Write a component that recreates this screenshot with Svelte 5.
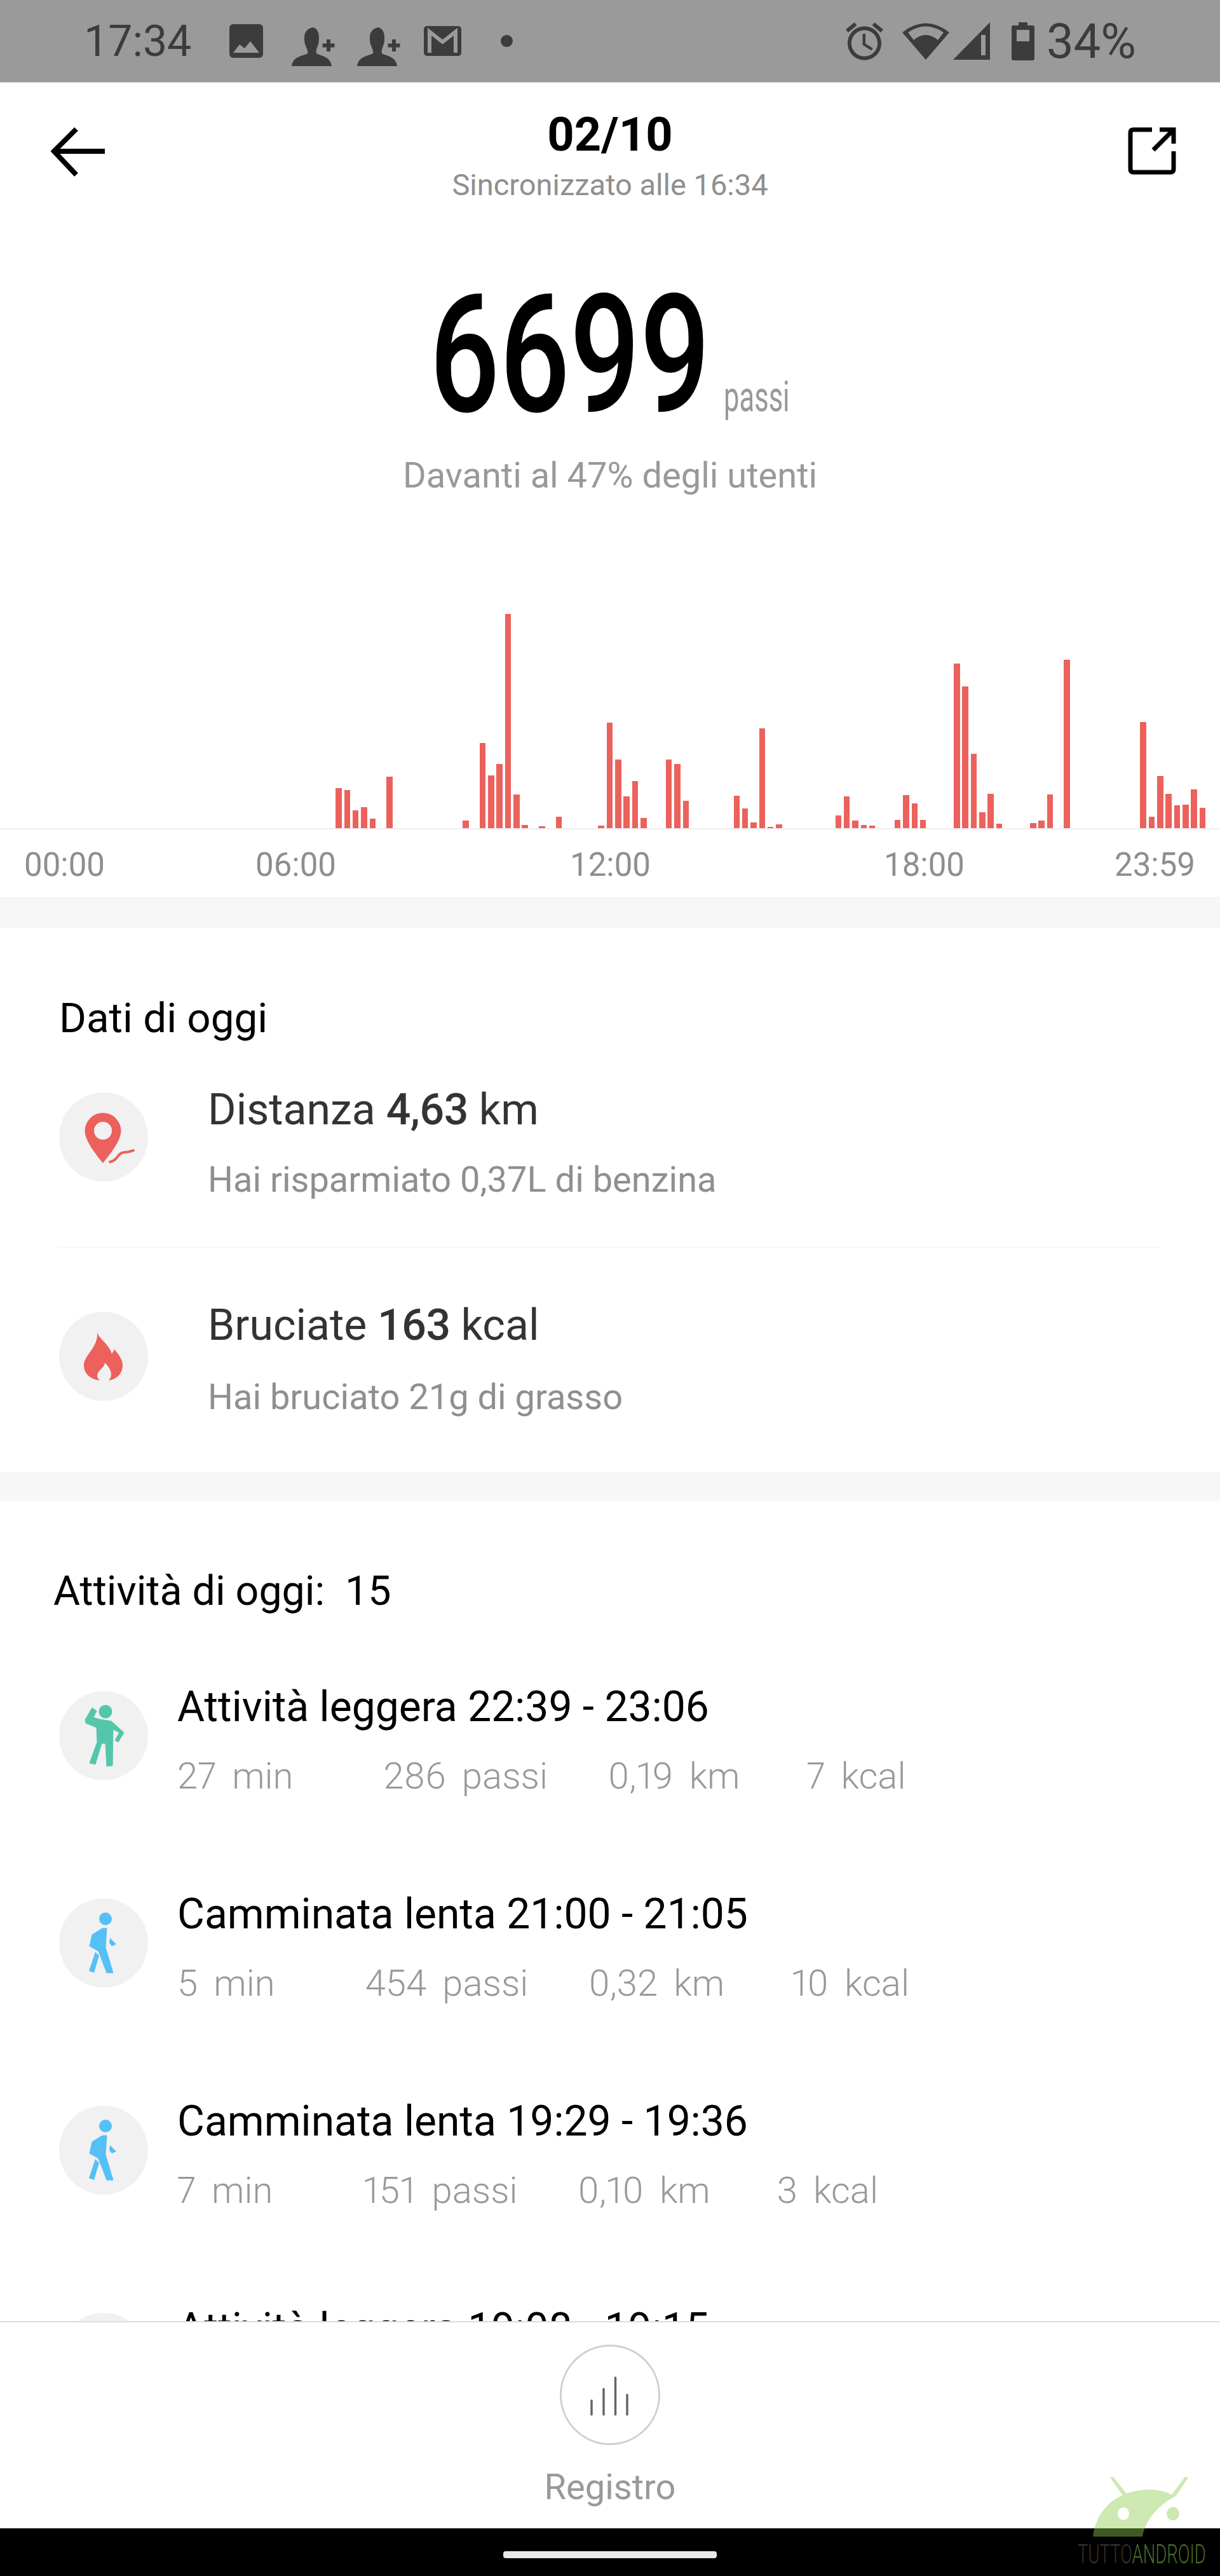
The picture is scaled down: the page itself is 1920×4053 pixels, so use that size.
<script>
  // [slot from the first active 10 minute bucket, height in px]
  const active = [
    [0, 63], [1, 60], [2, 28], [3, 33], [4, 15], [6, 81], [15, 12], [17, 134], [18, 83], [19, 101],
    [20, 337], [21, 53], [22, 5], [24, 3], [26, 18], [31, 4], [32, 166], [33, 108], [34, 50], [35, 74],
    [36, 16], [39, 108], [40, 101], [41, 43], [47, 51], [48, 31], [49, 9], [50, 157], [51, 2], [52, 6],
    [59, 20], [60, 50], [61, 12], [62, 5], [63, 4], [66, 13], [67, 52], [68, 39], [69, 13], [73, 259],
    [74, 223], [75, 117], [76, 25], [77, 54], [78, 7], [82, 8], [83, 12], [84, 53], [86, 265], [95, 167],
    [96, 18], [97, 82], [98, 54], [99, 36], [100, 37], [101, 61], [102, 32]
  ];
  const slots = Array(144).fill(0);
  for (const [i, h] of active) slots[i + 39] = h;

  const hours = ['00:00', '06:00', '12:00', '18:00', '23:59'];

  const activities = [
    { kind: 'stand', title: 'Attività leggera 22:39 - 23:06', meta: ['27 min', '286 passi', '0,19 km', '7 kcal'] },
    { kind: 'walk', title: 'Camminata lenta 21:00 - 21:05', meta: ['5 min', '454 passi', '0,32 km', '10 kcal'] },
    { kind: 'walk', title: 'Camminata lenta 19:29 - 19:36', meta: ['7 min', '151 passi', '0,10 km', '3 kcal'] },
    { kind: 'stand', title: 'Attività leggera 19:08 - 19:15', meta: [] }
  ];
</script>

<div class="page">
  <div class="status">
    <span class="clock">17:34</span>
    <svg class="st-image" width="53" height="53" viewBox="0 0 53 53">
      <rect width="53" height="53" rx="6" fill="#3c3c3c" />
      <path d="M6 45 L16 32 L24 38 L33 27 L47 45Z" fill="#9a9a9a" />
    </svg>
    {#each [0, 1] as n}
      <svg class="st-person" width="68" height="62" viewBox="0 0 68 62" data-n={n}>
        <path d="M33 1C41 3 43 10 43 17C43 21 43 26 41 30C39 35 38 39 39 42C45 46 61 46 63 62L0 62C2 46 19 46 25 42C26 39 24 35 22 30C20 26 20 21 20 17C20 8 25 3 33 1Z" fill="#3c3c3c" />
        <path d="M55 20h6v6.500h6.500v6h-6.500v6.500h-6v-6.500h-6.500v-6h6.500z" fill="#3c3c3c" />
      </svg>
    {/each}
    <svg class="st-mail" width="59" height="47" viewBox="0 0 59 47">
      <rect width="59" height="47" rx="5" fill="#3c3c3c" />
      <path d="M9 42V9L29.500 25L50 9V42" fill="none" stroke="#9a9a9a" stroke-width="6" />
    </svg>
    <span class="st-dot"></span>

    <div class="st-right">
      <svg class="st-alarm" width="59" height="60" viewBox="2 1.800 20 20.300">
        <path d="M22 5.720l-4.600-3.860-1.290 1.530 4.600 3.860L22 5.720zM7.880 3.390L6.600 1.860 2 5.710l1.290 1.530 4.590-3.850zM12.500 8H11v6l4.750 2.850.75-1.230-4-2.370V8zM12 4c-4.970 0-9 4.030-9 9s4.030 9 9 9 9-4.030 9-9-4.030-9-9-9zm0 16c-3.870 0-7-3.130-7-7s3.130-7 7-7 7 3.130 7 7-3.130 7-7 7z" fill="#3c3c3c" />
      </svg>
      <svg class="st-wifi" width="74" height="58" viewBox="0 0 74 58">
        <path d="M0 15Q37-14 74 15L37 58Z" fill="#3c3c3c" />
        <path d="M9 15Q37-4 65 15L56 27Q37 11 18 27Z" fill="#9a9a9a" />
      </svg>
      <svg class="st-signal" width="58" height="59" viewBox="0 0 58 59">
        <path d="M58 0V59H0Z" fill="#3c3c3c" />
        <path d="M44 20H51V52H44Z" fill="#9a9a9a" />
      </svg>
      <svg class="st-battery" width="36" height="60" viewBox="0 0 36 60">
        <path d="M11 0H25V5H33Q36 5 36 8V57Q36 60 33 60H3Q0 60 0 57V8Q0 5 3 5H11Z" fill="#3c3c3c" />
        <rect x="8" y="12" width="20" height="18" fill="#9a9a9a" />
      </svg>
      <span class="percent">34%</span>
    </div>
  </div>

  <header class="topbar">
    <svg class="back" width="85" height="78" viewBox="0 0 85 78">
      <path d="M85 38H6M40 3L5 38L40 75" fill="none" stroke="#000" stroke-width="8" />
    </svg>
    <div class="topbar-mid">
      <div class="date">02/10</div>
      <div class="synced">Sincronizzato alle 16:34</div>
    </div>
    <svg class="share" width="76" height="75" viewBox="0 0 76 75">
      <path d="M38 4H9Q4 4 4 9V66Q4 71 9 71H67Q72 71 72 66V38M40 36L72 4M50 4H72V26" fill="none" stroke="#000" stroke-width="7" />
    </svg>
  </header>

  <section class="hero">
    <div class="total">
      <span class="steps"><span>6699</span></span>
      <span class="unit"><span>passi</span></span>
    </div>
    <p class="rank">Davanti al 47% degli utenti</p>
  </section>

  <div class="chart">
    {#each slots as h}
      <div class="slot">
        {#if h}<div class="bar" style="height: {h}px"></div>{/if}
      </div>
    {/each}
  </div>
  <div class="axis">
    {#each hours as label}<span>{label}</span>{/each}
  </div>

  <div class="band first"></div>

  <section class="today">
    <h2>Dati di oggi</h2>
    <div class="stat">
      <div class="round">
        <svg width="140" height="140" viewBox="0 0 140 140">
          <path fill-rule="evenodd" d="M69 32A28.500 28.500 0 0 1 97.500 60C97.500 75 82 95 69 111C56 95 40.500 75 40.500 60A28.500 28.500 0 0 1 69 32ZM69 46A14 14 0 1 0 69 74A14 14 0 1 0 69 46Z" fill="#ec615c" />
          <path d="M80 109C92 108 92 94 103 94C110 94 112 93 117 91" fill="none" stroke="#ec615c" stroke-width="4" stroke-linecap="round" />
        </svg>
      </div>
      <div>
        <div class="stat-title">Distanza <b>4,63</b> km</div>
        <div class="stat-sub">Hai risparmiato 0,37L di benzina</div>
      </div>
    </div>
    <div class="stat burned">
      <div class="round">
        <svg width="140" height="140" viewBox="0 0 140 140">
          <path d="M60 32C62 42 78 50 83 66C86 62 87 60 86 58C95 68 100 76 100 84C100 98 90 106 78 108C84 102 84 92 72 80C72 88 60 92 60 100C60 103 62 106 64 108C50 106 39 98 39 84C39 68 62 56 60 32Z" fill="#ec615c" />
        </svg>
      </div>
      <div>
        <div class="stat-title">Bruciate <b>163</b> kcal</div>
        <div class="stat-sub">Hai bruciato 21g di grasso</div>
      </div>
    </div>
  </section>

  <div class="band"></div>

  <section class="activities">
    <h2>Attività di oggi:&nbsp; 15</h2>
    {#each activities as item}
      <div class="activity">
        <div class="round">
          {#if item.kind === 'stand'}
            <svg width="140" height="140" viewBox="0 0 140 140" fill="#53c6ab">
              <circle cx="73" cy="32" r="10.500" />
              <path d="M41 45L52 26L59 31L54 41L63 44L82 47L102 65L93 80L88 77L95 65L85 60L84 117L75 118L73 82L67 82L57 115L48 113L60 80L59 57L42 50Z" stroke="#53c6ab" stroke-width="1" stroke-linejoin="round" />
            </svg>
          {:else}
            <svg width="140" height="140" viewBox="0 0 140 140" fill="#55c0f5">
              <circle cx="73" cy="32" r="10" />
              <path d="M68 47L75 47L73 77L85 117L75 117L62 83L57 80L48 75L52 57Z" stroke="#55c0f5" stroke-width="1" stroke-linejoin="round" />
              <path d="M80 62L90 72L83 75L79 70Z" />
              <path d="M57 84L63 90L55 117L47 114Z" />
            </svg>
          {/if}
        </div>
        <div>
          <div class="activity-title">{item.title}</div>
          <div class="meta">
            {#each item.meta as m}<span>{m}</span>{/each}
          </div>
        </div>
      </div>
    {/each}
  </section>

  <nav class="tabbar">
    <div class="tab-icon">
      <svg width="62" height="62" viewBox="0 0 62 62">
        <path d="M2 38V60M21 20V60M39.500 2V60M58 29V60" stroke="#666" stroke-width="3.500" stroke-linecap="round" fill="none" />
      </svg>
    </div>
    <span>Registro</span>
  </nav>
  <div class="navbar"><span class="pill"></span></div>

  <div class="watermark">
    <svg width="156" height="96" viewBox="0 0 156 96">
      <g fill="#8fcc4d" opacity="0.44">
        <path fill-rule="evenodd" d="M4 94C8 62 30 22 92 20C110 20 122 24 133 31C108 44 86 68 82 94ZM52 48A9 10 0 1 0 52 68A9 10 0 1 0 52 48Z" />
        <ellipse cx="130" cy="58" rx="10" ry="10.500" />
        <path d="M31 1L36 0L58 28L52 31Z" />
        <path d="M149 0L154 1L134 31L128 28Z" />
      </g>
    </svg>
    <span class="wm-text">TUTTO<em>ANDROID</em></span>
  </div>
</div>

<style>
  :global(body) {
    margin: 0;
    background: #fff;
  }

  .page {
    position: relative;
    width: 1920px;
    height: 4053px;
    display: flex;
    flex-direction: column;
    overflow: hidden;
    font-family: Roboto, "Liberation Sans", sans-serif;
  }

  .status {
    flex: none;
    height: 130px;
    box-sizing: border-box;
    background: #9a9a9a;
    border-bottom: 1px solid #c4c4c4;
    display: flex;
    align-items: center;
    padding-left: 132px;
    color: #3c3c3c;
    font-size: 68px;
  }

  .clock {
    margin-right: 60px;
  }

  .st-image {
    margin-right: 45px;
  }

  .st-person {
    margin-right: 35px;
    margin-top: 16px;
  }

  .st-mail {
    margin-left: 2px;
    margin-right: 62px;
  }

  .st-dot {
    width: 19px;
    height: 19px;
    border-radius: 50%;
    background: #3c3c3c;
  }

  .st-right {
    margin-left: auto;
    padding-right: 132px;
    display: flex;
    align-items: center;
    height: 100%;
  }

  .st-alarm {
    margin-right: 30px;
  }

  .st-wifi {
    margin-right: 6px;
  }

  .st-signal {
    margin-right: 34px;
  }

  .st-battery {
    margin-right: 19px;
  }

  .percent {
    font-size: 76px;
  }

  .topbar {
    flex: none;
    display: grid;
    grid-template-columns: 1fr auto 1fr;
    padding: 42px 69px 0;
  }

  .back {
    margin: 28px 0 0 11px;
  }

  .share {
    justify-self: end;
    margin-top: 28px;
  }

  .topbar-mid {
    text-align: center;
  }

  .date {
    font-size: 74px;
    line-height: 80px;
    font-weight: 700;
    color: #000;
  }

  .synced {
    margin-top: 11px;
    font-size: 47px;
    line-height: 56px;
    color: #8f8f8f;
  }

  .hero {
    flex: none;
    padding-top: 140px;
  }

  .total {
    display: flex;
    justify-content: center;
    align-items: baseline;
    height: 200px;
    line-height: 200px;
    padding-right: 1px;
  }

  .steps {
    display: block;
    width: 432px;
    font-size: 259px;
    font-weight: 500;
    color: #000;
  }

  .steps span {
    display: inline-block;
    transform: scaleX(0.75);
    transform-origin: left;
  }

  .unit {
    display: block;
    width: 104px;
    margin-left: 31px;
    font-size: 66px;
    color: #999;
  }

  .unit span {
    display: inline-block;
    transform: scaleX(0.66);
    transform-origin: left;
  }

  .rank {
    margin: 56px 0 0;
    text-align: center;
    font-size: 56px;
    line-height: 66px;
    color: #999;
  }

  .chart {
    flex: none;
    height: 522px;
    box-sizing: border-box;
    padding-left: 8.400px;
    display: flex;
    align-items: flex-end;
  }

  .slot {
    flex: none;
    width: 13.330px;
  }

  .bar {
    width: 9.500px;
    background: #ec615c;
  }

  .axis {
    flex: none;
    border-top: 2px solid #eee;
    padding: 26px 0 21px 38px;
    display: grid;
    grid-template-columns: 364px 495px 494px 363px auto;
    font-size: 51px;
    line-height: 60px;
    color: #8e8e8e;
  }

  .band {
    flex: none;
    height: 46px;
    background: #f7f7f7;
  }

  .band.first {
    height: 47px;
    border-top: 1px solid #ededed;
  }

  .today {
    flex: none;
    padding: 104px 93px 86px;
  }

  .today h2 {
    margin: 0 0 66px;
    font-size: 65.500px;
    line-height: 76px;
    font-weight: 400;
    color: #000;
  }

  .stat {
    display: flex;
    gap: 94px;
    padding-bottom: 74px;
    border-bottom: 1px solid #f2f2f2;
  }

  .stat.burned {
    padding: 82px 0 0;
    border-bottom: 0;
  }

  .round {
    flex: none;
    width: 140px;
    height: 140px;
    margin-top: 13px;
    border-radius: 50%;
    background: #f1f1f1;
  }

  .round svg {
    display: block;
  }

  .burned .round {
    margin-top: 19px;
  }

  .stat-title {
    font-size: 68px;
    line-height: 80px;
    color: #333;
  }

  .stat-title b {
    font-weight: 500;
    letter-spacing: -0.500px;
  }

  .stat-sub {
    margin-top: 38px;
    font-size: 56px;
    line-height: 64px;
    color: #8f8f8f;
  }

  .burned .stat-sub {
    margin-top: 41px;
  }

  .activities {
    flex: 1;
    min-height: 0;
    overflow: hidden;
    padding: 104px 0 0 84px;
  }

  .activities h2 {
    margin: 0 0 108px;
    font-size: 64.500px;
    line-height: 74px;
    font-weight: 400;
    color: #000;
  }

  .activity {
    display: flex;
    gap: 46px;
    margin-left: 9px;
    margin-bottom: 147px;
  }

  .activity-title {
    font-size: 66px;
    line-height: 76px;
    color: #000;
  }

  .meta {
    display: flex;
    margin-top: 37px;
    font-size: 58px;
    line-height: 66px;
    font-weight: 300;
    color: #999;
    word-spacing: 11px;
    font-variant-numeric: proportional-nums;
  }

  .meta span:nth-child(2) {
    margin-left: 142px;
  }

  .meta span:nth-child(3) {
    margin-left: 95px;
  }

  .meta span:nth-child(4) {
    margin-left: 105px;
  }

  .activity:last-child {
    margin-bottom: 0;
  }

  .tabbar {
    flex: none;
    height: 326px;
    box-sizing: border-box;
    border-top: 2px solid #ddd;
    background: #fff;
    display: flex;
    flex-direction: column;
    align-items: center;
    font-size: 56px;
    line-height: 64px;
    color: #999;
  }

  .tab-icon {
    width: 158px;
    height: 158px;
    box-sizing: border-box;
    margin: 35px 0 34px;
    border: 3px solid #cfcfcf;
    border-radius: 50%;
    display: flex;
    align-items: center;
    justify-content: center;
  }

  .tab-icon svg {
    margin-top: 3px;
  }

  .navbar {
    flex: none;
    height: 75px;
    background: #000;
    display: flex;
    justify-content: center;
    padding-top: 36px;
    box-sizing: border-box;
  }

  .pill {
    width: 336px;
    height: 11px;
    border-radius: 4px;
    background: #e8e8e8;
  }

  .watermark {
    position: absolute;
    left: 1716px;
    top: 3897px;
  }

  .watermark svg {
    display: block;
  }

  .wm-text {
    position: absolute;
    left: -20px;
    top: 100px;
    white-space: nowrap;
    font-size: 42px;
    line-height: 44px;
    font-weight: 300;
    color: #333;
    transform: scaleX(0.655);
    transform-origin: left;
  }

  .wm-text em {
    font-style: normal;
    color: #4a6b26;
  }
</style>
